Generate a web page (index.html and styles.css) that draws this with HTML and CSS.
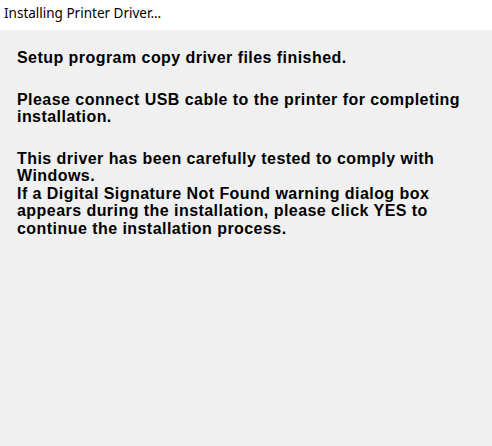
FILE: index.html
```html
<!DOCTYPE html>
<html>
<head>
<meta charset="utf-8">
<link rel="stylesheet" href="styles.css">
</head>
<body>
<div class="window">
  <div class="titlebar">Installing Printer Driver...</div>
  <div class="client">
    <div class="message">
      <p>Setup program copy driver files finished.</p>
      <p>Please connect USB cable to the printer for completing<br>installation.</p>
      <p>This driver has been carefully tested to comply with<br>Windows.<br>If a Digital Signature Not Found warning dialog box<br>appears during the installation, please click YES to<br>continue the installation process.</p>
    </div>
  </div>
</div>
</body>
</html>
```

FILE: styles.css
```css
html, body {
  margin: 0;
  padding: 0;
  background: #ffffff;
}
.window {
  width: 492px;
  height: 446px;
  display: flex;
  flex-direction: column;
}
.titlebar {
  height: 30px;
  box-sizing: border-box;
  padding: 4px 0 0 4px;
  font-family: "Noto Sans", "Open Sans", sans-serif;
  font-size: 13.5px;
  line-height: 18px;
  color: #000;
  background: #ffffff;
}
.client {
  flex: 1;
  background: #f0f0f0;
  padding: 19px 0 0 17px;
}
.message {
  font-family: "Liberation Sans", Arial, sans-serif;
  font-weight: bold;
  font-size: 16px;
  line-height: 17.5px;
  color: #000;
  letter-spacing: 0.45px;
}
.message p {
  margin: 0 0 24px 0;
}
```
